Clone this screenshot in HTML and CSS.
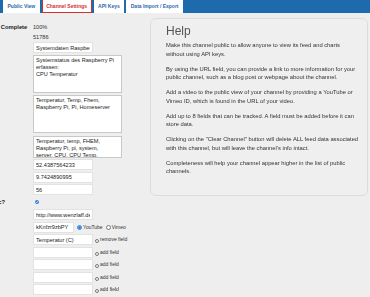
FILE: index.html
```html
<!DOCTYPE html>
<html lang="en">
<head>
  <meta charset="UTF-8">
  <title>Channel Settings</title>
  <link rel="stylesheet" href="styles.css">
</head>
<body>
  <!-- Tabs -->
  <div class="topbar">
    <div class="tab">Public View</div>
    <div class="tab active">Channel Settings</div>
    <div class="tab">API Keys</div>
    <div class="tab">Data Import / Export</div>
  </div>

  <div class="main">
    <!-- Settings form -->
    <div class="form">
      <div class="row text-row first">
        <label>Percentage Complete</label>
        <span>100%</span>
      </div>
      <div class="row text-row">
        <label>Channel ID</label>
        <span>51786</span>
      </div>
      <div class="row">
        <label>Name</label>
        <input type="text" class="short" value="Systemdaten Raspberry Pi">
      </div>
      <div class="row">
        <label>Description</label>
        <textarea class="tall">Systemstatus des Raspberry Pi erfassen:
CPU Temperatur</textarea>
      </div>
      <div class="row">
        <label>Metadata</label>
        <textarea class="tall">Temperatur, Temp, Fhem, Raspberry Pi, Pi, Homeserver</textarea>
      </div>
      <div class="row">
        <label>Tags</label>
        <textarea class="tags">Temperatur, temp, FHEM, Raspberry Pi, pi, system, server, CPU, CPU Temp, Systemdaten</textarea>
      </div>
      <div class="row">
        <label>Latitude</label>
        <input type="text" class="short" value="52.4387564233">
      </div>
      <div class="row">
        <label>Longitude</label>
        <input type="text" class="short" value="9.7424890995">
      </div>
      <div class="row">
        <label>Elevation</label>
        <input type="text" class="short" value="56">
      </div>
      <div class="row check-row">
        <label>Make Public?</label>
        <input type="checkbox" class="check" checked>
      </div>
      <div class="row">
        <label>URL</label>
        <input type="text" class="short" value="http://www.wenzlaff.de">
      </div>
      <div class="row">
        <label>Video ID</label>
        <input type="text" class="video" value="kKnfzr9zbPY">
        <input type="radio" name="video" class="radio" checked><span class="opt">YouTube</span>
        <input type="radio" name="video" class="radio"><span class="opt">Vimeo</span>
      </div>
      <div class="row">
        <label>Field 1</label>
        <input type="text" class="short" value="Temperatur (C)">
        <input type="checkbox" class="field-check"><span class="opt">remove field</span>
      </div>
      <div class="row">
        <label>Field 2</label>
        <input type="text" class="short">
        <input type="checkbox" class="field-check"><span class="opt">add field</span>
      </div>
      <div class="row">
        <label>Field 3</label>
        <input type="text" class="short">
        <input type="checkbox" class="field-check"><span class="opt">add field</span>
      </div>
      <div class="row">
        <label>Field 4</label>
        <input type="text" class="short">
        <input type="checkbox" class="field-check"><span class="opt">add field</span>
      </div>
      <div class="row">
        <label>Field 5</label>
        <input type="text" class="short">
        <input type="checkbox" class="field-check"><span class="opt">add field</span>
      </div>
      <div class="row">
        <label>Field 6</label>
        <input type="text" class="short">
        <input type="checkbox" class="field-check"><span class="opt">add field</span>
      </div>
    </div>

    <!-- Help box -->
    <div class="help">
      <h2>Help</h2>
      <p>Make this channel public to allow anyone to view its feed and charts without using API keys.</p>
      <p>By using the URL field, you can provide a link to more information for your public channel, such as a blog post or webpage about the channel.</p>
      <p>Add a video to the public view of your channel by providing a YouTube or Vimeo ID, which is found in the URL of your video.</p>
      <p>Add up to 8 fields that can be tracked. A field must be added before it can store data.</p>
      <p>Clicking on the "Clear Channel" button will delete ALL feed data associated with this channel, but will leave the channel's info intact.</p>
      <p>Completeness will help your channel appear higher in the list of public channels.</p>
    </div>
  </div>
</body>
</html>
```

FILE: styles.css
```css
body {
  margin: 0;
  padding: 0;
  background: #eeeeee;
  color: #333;
  font-family: "Liberation Sans", Arial, sans-serif;
  overflow: hidden;
}

.topbar {
  display: flex;
  gap: 2px;
  height: 13px;
  padding-left: 3px;
  background: #1d6bad;
}

.tab {
  height: 13px;
  padding: 0 3.5px;
  box-sizing: border-box;
  background: #fff;
  color: #2a6aa8;
  font-size: 5px;
  font-weight: bold;
  line-height: 13px;
  border: 1px solid #fff;
  border-top: none;
}

.tab.active {
  color: #d0312d;
  border-color: #d0312d;
  line-height: 12px;
}

.main {
  display: flex;
  align-items: flex-start;
}

.form {
  width: 162px;
  margin-left: -32px;
  flex-shrink: 0;
}

.row {
  display: flex;
  align-items: flex-start;
  margin-bottom: 1.5px;
  font-size: 5.6px;
}

.row label {
  width: 65px;
  flex-shrink: 0;
  font-size: 5.8px;
  font-weight: bold;
  color: #222;
}

.text-row {
  height: 10px;
  line-height: 10px;
  margin-bottom: 0;
}

.text-row label {
  line-height: 10px;
}

.first {
  margin-top: 9px;
}

input[type="text"], textarea {
  box-sizing: border-box;
  margin: 0;
  padding: 1px 2px;
  font-family: "Liberation Sans", Arial, sans-serif;
  font-size: 5.6px;
  color: #222;
  background: #fff;
  border: 1px solid #e2e2e2;
  border-radius: 0;
}

input[type="text"] {
  height: 11px;
}

.short {
  width: 60px;
}

.video {
  width: 41px;
}

textarea {
  width: 89px;
  line-height: 7.3px;
  resize: none;
  border-color: #c8c8c8;
  overflow: hidden;
}

.tall {
  height: 38px;
  margin-bottom: 1px;
}

.tags {
  height: 22px;
  padding-right: 7px;
  overflow-y: scroll;
}

.tags::-webkit-scrollbar {
  width: 6px;
  background: #f4f4f4;
}

.tags::-webkit-scrollbar-thumb {
  background: #b8b8b8;
  border: 1px solid #f4f4f4;
  border-radius: 3px;
}

.check-row {
  height: 11px;
  align-items: center;
}

.check-row label {
  line-height: 7px;
}

.check {
  width: 4px;
  height: 4px;
  margin: 0 0 0 2px;
  accent-color: #2f7fe0;
}

.radio {
  width: 5px;
  height: 5px;
  margin: 3px 1px 0 3px;
  accent-color: #2f7fe0;
}

.field-check {
  width: 4px;
  height: 4px;
  margin: 5px 1px 0 2px;
}

.opt {
  line-height: 11px;
  font-size: 5px;
  color: #333;
}

.help {
  flex: 1;
  margin: 5px 2px 0 20px;
  padding: 4px 8px 12px 15px;
  height: 178px;
  box-sizing: border-box;
  background: #efefef;
  border: 1px solid #dcdcdc;
  border-radius: 6px;
}

.help h2 {
  margin: 0 0 2px;
  font-size: 12px;
  font-weight: normal;
  color: #555;
  line-height: 16px;
}

.help p {
  margin: 0 0 6.5px;
  font-size: 5.8px;
  line-height: 8.5px;
  color: #333;
}
```
